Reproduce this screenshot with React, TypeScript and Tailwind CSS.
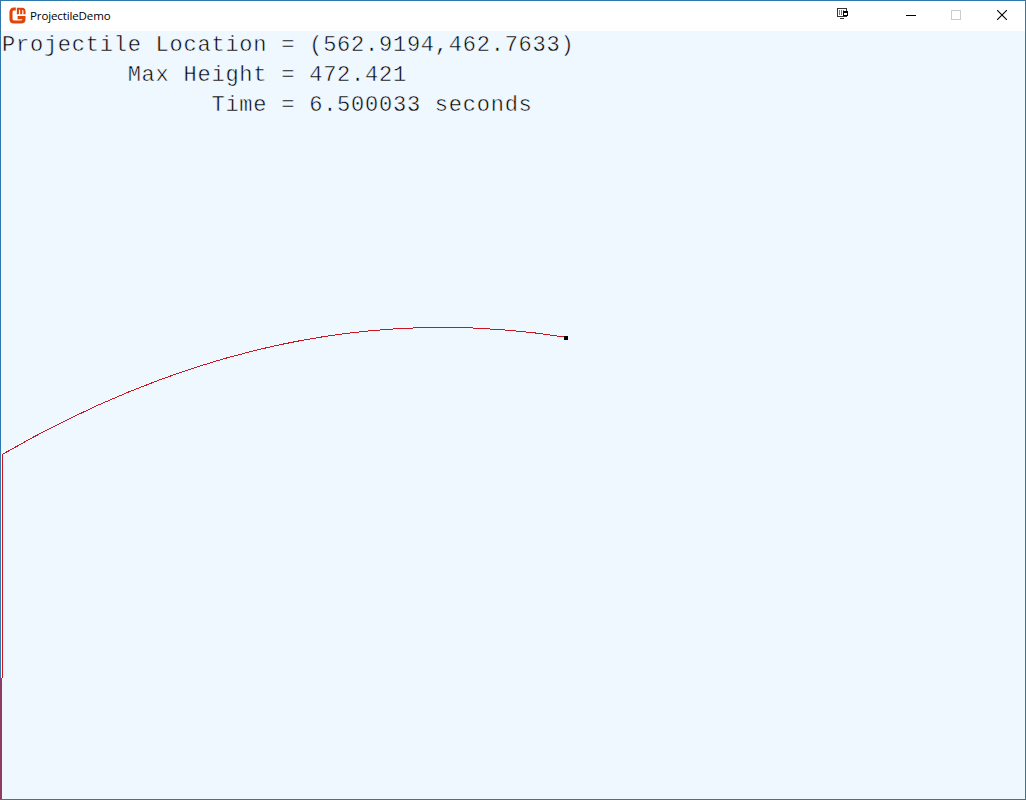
const readout = [
  'Projectile Location = (562.9194,462.7633)',
  '         Max Height = 472.421',
  '               Time = 6.500033 seconds',
];

function AppIcon() {
  return (
    <svg width="17" height="17" viewBox="0 0 17 17" className="-mt-[2px] shrink-0">
      <g fill="none" stroke="#e04408">
        <path d="M6.8 2H5Q2 2 2 5V12Q2 15 5 15H12Q15 15 15 12V10.6H8.6" strokeWidth="3.1" />
        <path d="M8.9 7.2V1.7H13Q15.5 1.7 15.5 4.2V7.2M12.2 1.7V7.2" strokeWidth="2.1" />
      </g>
    </svg>
  );
}

function TitleBar() {
  return (
    <header className="flex h-[30px] shrink-0 items-center bg-white pl-2">
      <AppIcon />
      <h1 className="ml-1 flex-1 font-['Open_Sans','Noto_Sans',sans-serif] text-[11.5px] leading-[28px] tracking-[-0.12px] text-black">
        ProjectileDemo
      </h1>
      <svg width="12" height="12" viewBox="0 0 12 12" shapeRendering="crispEdges" className="mr-[39px] -mt-[5px]">
        <path d="M0.5 0.5H9.5V8.5H0.5Z" fill="none" stroke="#333" />
        <path d="M2.5 2V7M4.5 2V7M6.5 2V7" stroke="#777" />
        <rect x="6" y="3" width="5" height="5" fill="#000" />
        <rect x="7" y="5" width="3" height="2" fill="#fff" />
        <path d="M3 10.5H7" stroke="#333" />
      </svg>
      <button aria-label="Minimize" className="flex h-full w-[45px] items-center justify-center">
        <svg width="10" height="10" viewBox="0 0 10 10" shapeRendering="crispEdges" className="-mt-[2px]">
          <path d="M0 5.5H10" stroke="#000" />
        </svg>
      </button>
      <button aria-label="Maximize" className="flex h-full w-[45px] items-center justify-center">
        <svg width="10" height="10" viewBox="0 0 10 10" shapeRendering="crispEdges" className="-mt-[2px]">
          <path d="M0.5 0.5H9.5V9.5H0.5Z" fill="none" stroke="#ccc" />
        </svg>
      </button>
      <button aria-label="Close" className="flex h-full w-[47px] items-center justify-center">
        <svg width="10" height="10" viewBox="0 0 10 10" className="-mt-[2px]">
          <path d="M0 0L10 10M10 0L0 10" stroke="#000" strokeWidth="1.1" />
        </svg>
      </button>
    </header>
  );
}

export default function App() {
  return (
    <div className="relative flex h-[800px] w-[1026px] flex-col border border-[#2f78ad] bg-[#f0f8ff]">
      <TitleBar />
      <main className="flex-1 pl-px pt-px">
        {readout.map((line) => (
          <p
            key={line}
            className="h-[30px] whitespace-pre font-['Liberation_Mono',monospace] text-[22px] leading-[28px] tracking-[0.76px] text-black [-webkit-text-stroke:0.5px_#f0f8ff]"
          >
            {line}
          </p>
        ))}
      </main>
      <svg
        width="1026"
        height="800"
        viewBox="0 0 1026 800"
        shapeRendering="crispEdges"
        className="pointer-events-none absolute -left-px -top-px"
      >
        <path d="M2.5 454.3Q284.25 291.8 566 337.3" fill="none" stroke="#cb1620" />
        <path d="M2.5 454V678" stroke="#cb1620" />
        <rect x="0" y="678" width="2" height="121" fill="#8e3c66" />
        <rect x="564" y="336" width="4" height="4" fill="#000" />
      </svg>
    </div>
  );
}
